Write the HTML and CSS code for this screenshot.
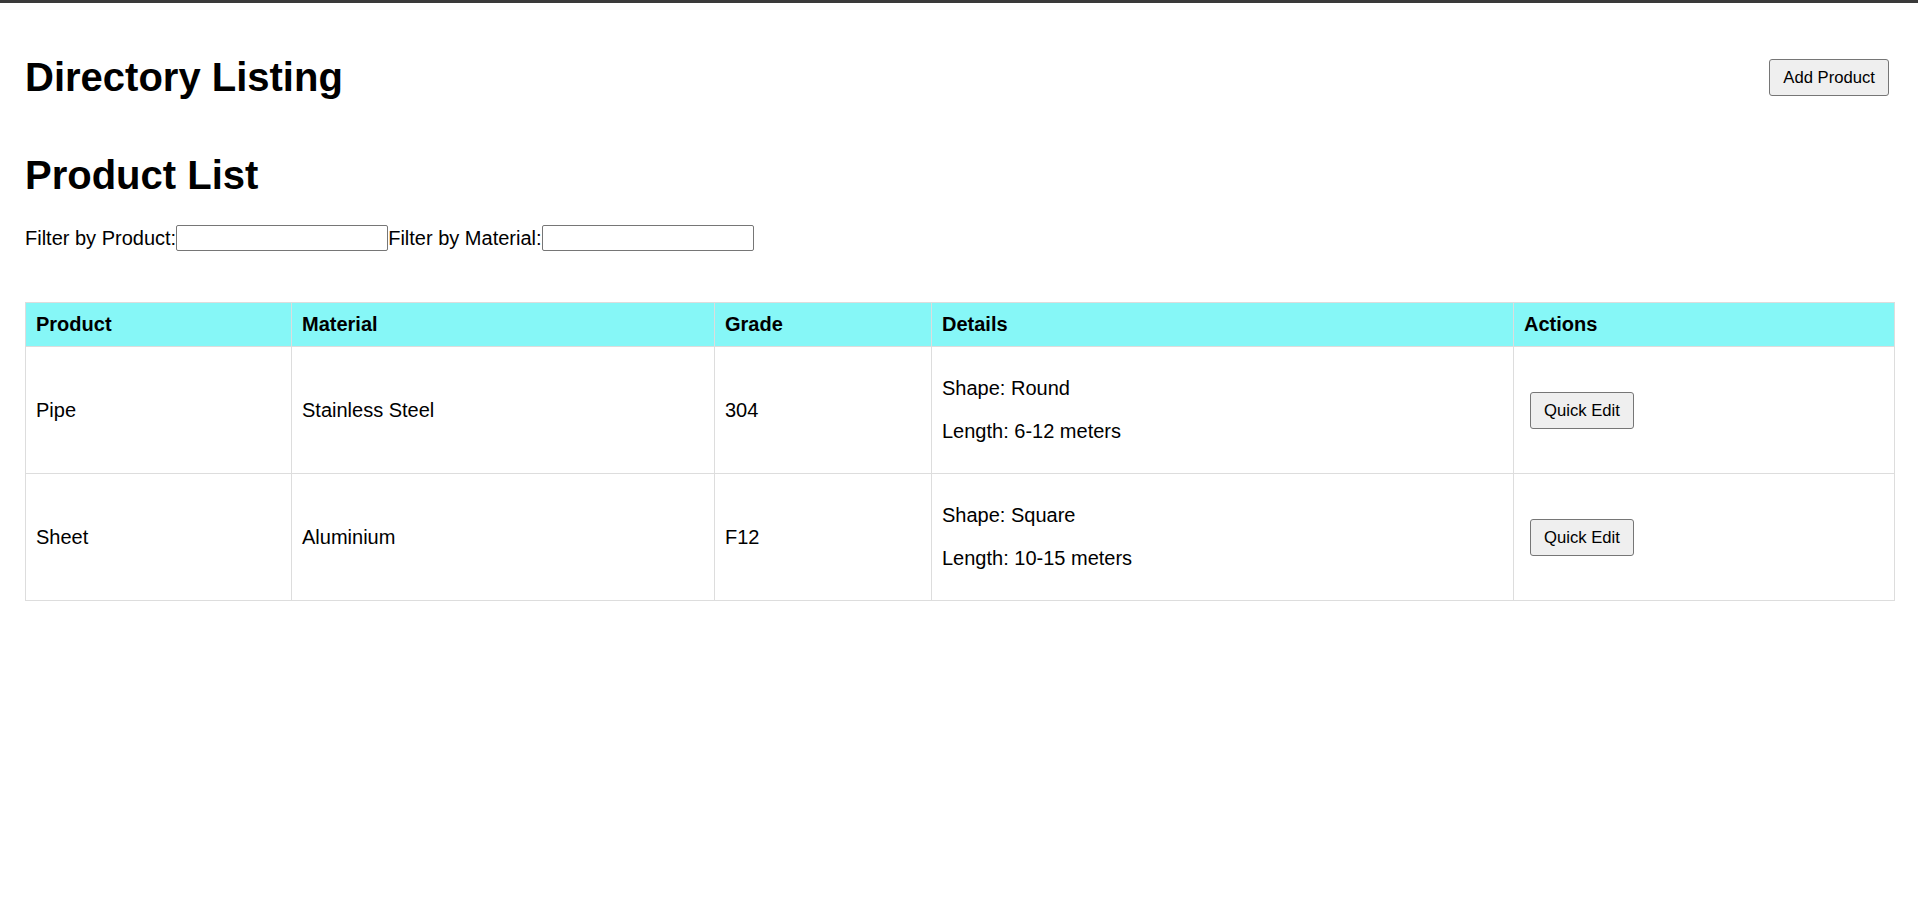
FILE: index.html
```html
<!DOCTYPE html>
<html lang="en">
<head>
<meta charset="utf-8">
<title>Directory Listing</title>
<link rel="stylesheet" href="styles.css">
</head>
<body>
<div class="topbar"></div>
<div class="page">
  <header class="header">
    <h1 class="title">Directory Listing</h1>
    <button class="btn" type="button">Add Product</button>
  </header>
  <h2 class="subtitle">Product List</h2>
  <div class="filters">
    <label class="filter-label" for="fp">Filter by Product:</label><input class="filter-input" id="fp" type="text"><label class="filter-label" for="fm">Filter by Material:</label><input class="filter-input" id="fm" type="text">
  </div>
  <table class="products">
    <colgroup>
      <col class="col-product">
      <col class="col-material">
      <col class="col-grade">
      <col class="col-details">
      <col class="col-actions">
    </colgroup>
    <thead>
      <tr>
        <th>Product</th>
        <th>Material</th>
        <th>Grade</th>
        <th>Details</th>
        <th>Actions</th>
      </tr>
    </thead>
    <tbody>
      <tr>
        <td>Pipe</td>
        <td>Stainless Steel</td>
        <td>304</td>
        <td><p class="detail">Shape: Round</p><p class="detail">Length: 6-12 meters</p></td>
        <td><button class="btn" type="button">Quick Edit</button></td>
      </tr>
      <tr>
        <td>Sheet</td>
        <td>Aluminium</td>
        <td>F12</td>
        <td><p class="detail">Shape: Square</p><p class="detail">Length: 10-15 meters</p></td>
        <td><button class="btn" type="button">Quick Edit</button></td>
      </tr>
    </tbody>
  </table>
</div>
</body>
</html>
```
FILE: styles.css
```css
html, body {
  margin: 0;
  padding: 0;
  background: #ffffff;
}
body {
  font-family: "Liberation Sans", Arial, sans-serif;
  font-size: 20px;
  color: #000000;
}
.topbar {
  height: 3px;
  background: #3a3a3a;
}
.page {
  padding: 25px 23px 25px 25px;
}
.header {
  display: flex;
  justify-content: space-between;
  align-items: center;
}
.title {
  margin: 26px 0;
  font-size: 40px;
  font-weight: bold;
  line-height: 46px;
}
.subtitle {
  margin: 26px 0 27px;
  font-size: 40px;
  font-weight: bold;
  line-height: 46px;
}
.btn {
  font-family: "Liberation Sans", Arial, sans-serif;
  font-size: 16.67px;
  line-height: 19px;
  color: #000000;
  background: #efefef;
  border: 1px solid #767676;
  border-radius: 3px;
  padding: 8px 13px;
  margin: 5px 6px;
}
.filters {
  display: flex;
  align-items: center;
  height: 26px;
  margin-bottom: 51px;
}
.filter-label {
  line-height: 23px;
}
.filter-input {
  box-sizing: border-box;
  width: 212px;
  height: 26px;
  margin: 0;
  padding: 1px 2px;
  border: 1px solid #767676;
  border-radius: 2px;
  font-family: "Liberation Sans", Arial, sans-serif;
  font-size: 16.67px;
}
.products {
  width: 100%;
  border-collapse: collapse;
  table-layout: fixed;
}
.col-product { width: 266px; }
.col-material { width: 423px; }
.col-grade { width: 217px; }
.col-details { width: 582px; }
.products th,
.products td {
  border: 1px solid #dddddd;
  padding: 10px;
  text-align: left;
  vertical-align: middle;
  line-height: 23px;
}
.products th {
  background: #86f7f7;
  font-weight: bold;
}
.detail {
  margin: 20px 0;
}
```
